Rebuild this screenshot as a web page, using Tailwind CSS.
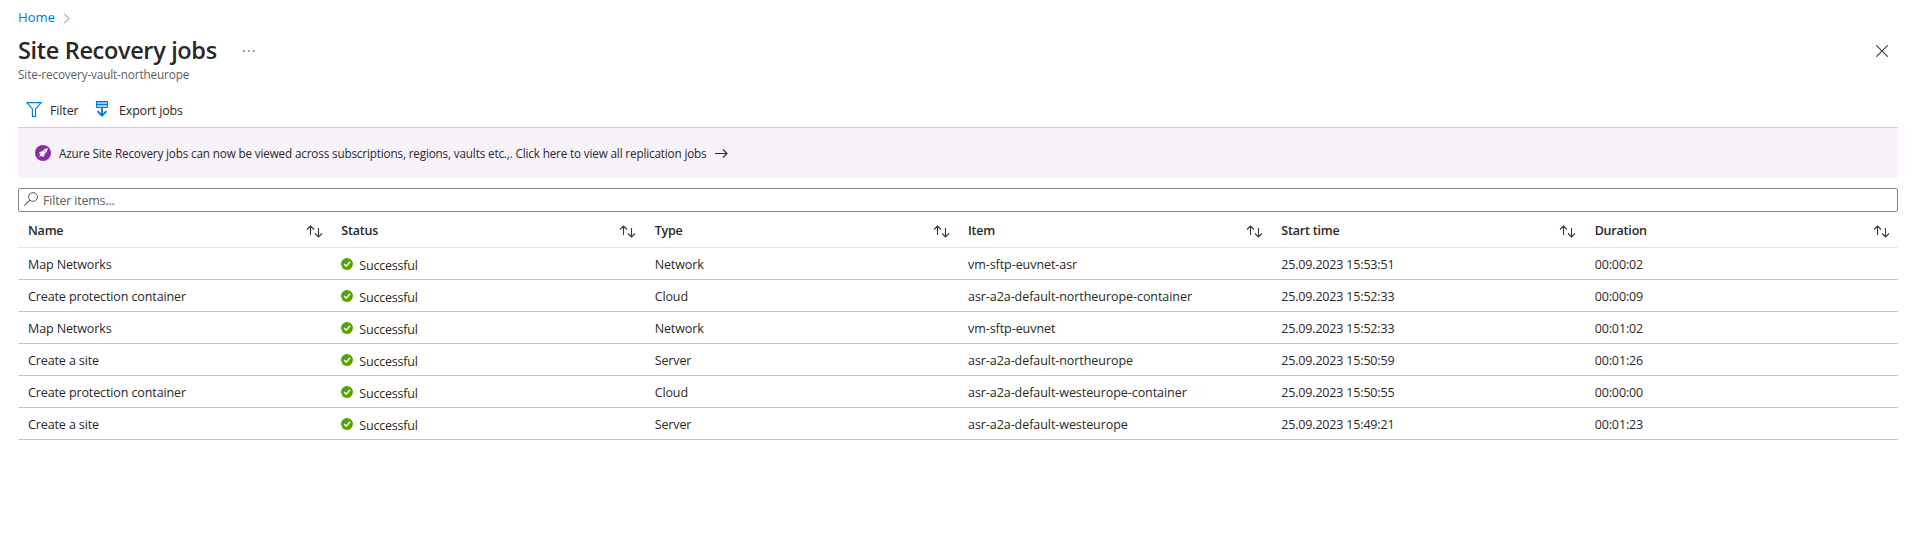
<!DOCTYPE html>
<html lang="en">
<head>
<meta charset="utf-8">
<title>Site Recovery jobs</title>
<script src="https://cdn.jsdelivr.net/npm/@tailwindcss/browser@4"></script>
</head>
<body class="h-[541px] overflow-hidden bg-white pl-[18px] pr-[14px] font-['Open_Sans','Noto_Sans',sans-serif] text-[12.5px] text-[#292827]">
<svg class="hidden">
  <symbol id="sort" viewBox="0 0 17 13"><path d="M4.5 10V1.2M1 4.5 4.5 1 8 4.5M12.5 3v8.8M9 8.5l3.500 3.500L16 8.500" fill="none" stroke="#3b3a39" stroke-width="1.1"/></symbol>
  <symbol id="ok" viewBox="0 0 12 12"><circle cx="6" cy="6" r="6" fill="#57a300"/><path d="M3.200 6.100l2 2.100L8.900 4" fill="none" stroke="#fff" stroke-width="1.400"/></symbol>
</svg>

<nav class="flex h-[34px] items-center gap-[8px] text-[13px]">
  <a class="leading-[34px] tracking-[0.1px] text-[#0078d4]">Home</a>
  <svg class="mt-[2px] h-[11px] w-[7px]" viewBox="0 0 7 11"><path d="M1 .5l5 5-5 5" fill="none" stroke="#7a7978"/></svg>
</nav>

<header class="flex h-[51px] items-start">
  <div>
    <h1 class="h-[32px] whitespace-nowrap text-[23.500px] font-semibold leading-[33px] tracking-[-0.34px]">Site Recovery jobs</h1>
    <p class="h-[16px] text-[11.750px] leading-[16px] tracking-[-0.14px] text-[#605e5c]">Site-recovery-vault-northeurope</p>
  </div>
  <svg class="ml-[26px] mt-[16px] h-[2px] w-[12px]" viewBox="0 0 12 2"><path d="M0 1h1.500M5 1h1.500M10 1h1.500" stroke="#605e5c" stroke-width="1.300"/></svg>
  <svg class="ml-auto mr-[10px] mt-[11px] h-[12px] w-[12px]" viewBox="0 0 12 12"><path d="M.3.3l11.400 11.400M11.700.3.3 11.700" stroke="#3b3a39" stroke-width="1.100"/></svg>
</header>

<div class="flex h-[43px] items-center border-b border-[#d2d0ce] pl-[8px] pt-[9px]">
  <svg class="mb-[2px] h-[15px] w-[16px]" viewBox="0 0 16 15"><path d="M.8.600h14.400L9.600 7v7.400H6.400V7z" fill="none" stroke="#0078d4" stroke-width="1.100"/></svg>
  <span class="ml-[8px] w-[45px] pt-[2px] tracking-[-0.14px]">Filter</span>
  <svg class="mb-[3px] h-[16px] w-[14px]" viewBox="0 0 14 16"><path d="M1.500.500h11v6h-11z" fill="#9fd0f5" stroke="#0078d4"/><path d="M1 .6h12M1 3.500h12" stroke="#0078d4" stroke-width="1.200"/><path d="M7 6.500v8M2.500 10.200 7 14.700l4.500-4.500" fill="none" stroke="#0078d4" stroke-width="1.800"/></svg>
  <span class="ml-[10px] pt-[2px] tracking-[-0.18px]">Export jobs</span>
</div>

<div class="flex h-[50px] items-center bg-[#f8f3fb] pl-[17px]">
  <svg class="h-[16px] w-[16px]" viewBox="0 0 16 16"><circle cx="8" cy="8" r="8" fill="#8a2da5"/><path d="M12.700 3.200c-2.500.1-4.200 1.300-5.500 3.200L5 6.800 3.800 8.600l2 .2L4 12l3.200-1.700.2 2 1.700-1.200.4-2.300c2-1.300 3.100-3 3.200-5.600z" fill="#fff"/><circle cx="10" cy="5.900" r=".6" fill="#8a2da5"/></svg>
  <span class="ml-[8px] whitespace-nowrap pt-[2px] text-[11.700px] tracking-[-0.147px]">Azure Site Recovery jobs can now be viewed across subscriptions, regions, vaults etc.,. Click here to view all replication jobs</span>
  <svg class="ml-[8px] h-[9px] w-[13px]" viewBox="0 0 13 9"><path d="M0 4.500h12M8 .5l4 4-4 4" fill="none" stroke="#292827" stroke-width="1.100"/></svg>
</div>

<div class="mt-[10px] flex h-[24px] items-center rounded-[2px] border border-[#8a8886] pl-[5px] text-[#605e5c]">
  <svg class="mb-[2px] h-[14px] w-[14px]" viewBox="0 0 14 14"><circle cx="9" cy="5" r="4.400" fill="none" stroke="#605e5c"/><path d="M5.800 8.200.4 13.600" stroke="#605e5c" stroke-width="1.100"/></svg>
  <span class="ml-[5px] pt-[2px] tracking-[-0.2px]">Filter items...</span>
</div>

<div id="jobs"></div>

<script>
const columns = ['Name', 'Status', 'Type', 'Item', 'Start time', 'Duration'];
const jobs = [
  ['Map Networks', 'Network', 'vm-sftp-euvnet-asr', '25.09.2023 15:53:51', '00:00:02'],
  ['Create protection container', 'Cloud', 'asr-a2a-default-northeurope-container', '25.09.2023 15:52:33', '00:00:09'],
  ['Map Networks', 'Network', 'vm-sftp-euvnet', '25.09.2023 15:52:33', '00:01:02'],
  ['Create a site', 'Server', 'asr-a2a-default-northeurope', '25.09.2023 15:50:59', '00:01:26'],
  ['Create protection container', 'Cloud', 'asr-a2a-default-westeurope-container', '25.09.2023 15:50:55', '00:00:00'],
  ['Create a site', 'Server', 'asr-a2a-default-westeurope', '25.09.2023 15:49:21', '00:01:23']
];
const head = columns.map(c => `<div class="flex items-center pl-[10px] pr-[8.5px]"><span class="pt-[3px] font-semibold tracking-[-0.2px]">${c}</span><svg class="ml-auto mt-[3px] h-[13px] w-[17px]"><use href="#sort"/></svg></div>`).join('');
const cell = (t, tracking) => `<div class="h-[31px] pl-[10px] pt-px ${tracking}">${t}</div>`;
const rows = jobs.map(([name, type, item, start, duration]) => `<div class="grid h-[32px] grid-cols-6 border-b border-[#c8c6c4] leading-[31px]">
${cell(name, 'tracking-[-0.11px]')}
<div class="flex h-[31px] items-center pl-[10px]"><svg class="mt-px h-[12px] w-[12px]"><use href="#ok"/></svg><span class="ml-[6px] h-[31px] pt-[2px] leading-[31px] tracking-[-0.2px]">Successful</span></div>
${cell(type, 'tracking-[-0.11px]')}${cell(item, 'tracking-[-0.06px]')}${cell(start, 'tracking-[-0.18px]')}${cell(duration, 'tracking-[-0.12px]')}
</div>`).join('');
document.getElementById('jobs').innerHTML = `<div class="grid h-[36px] grid-cols-6 border-b border-[#e6e5e4]">${head}</div>${rows}`;
</script>
</body>
</html>
